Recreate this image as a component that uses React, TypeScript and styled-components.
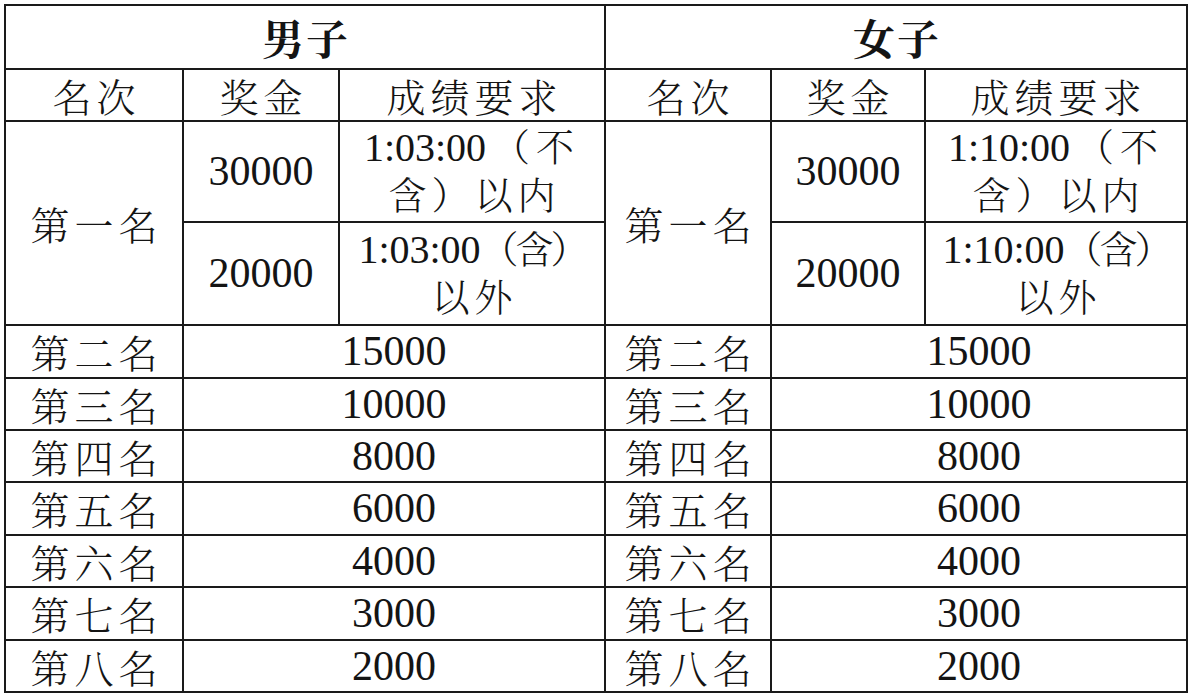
import React from 'react';
import styled, { createGlobalStyle } from 'styled-components';

const GlobalStyle = createGlobalStyle`
  html, body {
    margin: 0;
    padding: 0;
    background: #ffffff;
  }
  body {
    padding: 4px;
  }
`;

const cjk = `"Noto Serif CJK SC", "Noto Sans CJK SC", serif`;

const Table = styled.table`
  border-collapse: collapse;
  table-layout: fixed;
  width: 1184px;
  color: #141414;
  background: #ffffff;
`;

const Row = styled.tr<{ $h: number }>`
  height: ${(p) => p.$h}px;
`;

const Cell = styled.td<{ $num?: boolean; $bold?: boolean }>`
  border: 2px solid #1a1a1a;
  padding: 0;
  text-align: center;
  vertical-align: middle;
  font-family: ${(p) => (p.$num ? `"Liberation Serif", ${cjk}` : cjk)};
  font-size: ${(p) => (p.$bold ? 42 : p.$num ? 42 : 39)}px;
  font-weight: ${(p) => (p.$bold ? 700 : 300)};
  letter-spacing: ${(p) => (p.$num ? 0 : p.$bold ? 2 : 5)}px;
  padding-left: ${(p) => (p.$num ? 0 : p.$bold ? 2 : 5)}px;
  line-height: 1.15;
  white-space: nowrap;
`;

const Lines = styled.div`
  display: flex;
  flex-direction: column;
  align-items: center;
  line-height: 48px;
  font-family: "Liberation Serif", ${cjk};
  font-size: 40px;
  font-weight: 300;
`;

const Paren = styled.span<{ $gap: number }>`
  font-size: 38px;
  letter-spacing: ${(p) => p.$gap}px;
  margin-left: ${(p) => (p.$gap > 0 ? p.$gap : 0)}px;
`;

const Group = styled.div`
  font-size: 38px;
  letter-spacing: 5px;
  padding-left: 5px;
`;

const cols = [178, 156, 266, 166, 154, 262];

const places = [
  ['第二名', '15000'],
  ['第三名', '10000'],
  ['第四名', '8000'],
  ['第五名', '6000'],
  ['第六名', '4000'],
  ['第七名', '3000'],
  ['第八名', '2000'],
];
const placeHeights = [53, 52, 52, 53, 52, 53, 52];

const Requirement: React.FC<{ time: string; within: boolean }> = ({ time, within }) =>
  within ? (
    <Lines>
      <span>
        {time}
        <Paren $gap={6}>（不</Paren>
      </span>
      <Group>含）以内</Group>
    </Lines>
  ) : (
    <Lines>
      <span>
        {time}
        <Paren $gap={-3}>（含）</Paren>
      </span>
      <Group>以外</Group>
    </Lines>
  );

const App: React.FC = () => {
  const sides = [
    { title: '男子', time: '1:03:00' },
    { title: '女子', time: '1:10:00' },
  ];
  return (
    <>
      <GlobalStyle />
      <Table>
        <colgroup>
          {cols.map((w, i) => (
            <col key={i} style={{ width: w }} />
          ))}
        </colgroup>
        <tbody>
          <Row $h={64}>
            {sides.map((s) => (
              <Cell key={s.title} colSpan={3} $bold>
                {s.title}
              </Cell>
            ))}
          </Row>
          <Row $h={52}>
            {sides.map((s) => (
              <React.Fragment key={s.title}>
                <Cell>名次</Cell>
                <Cell>奖金</Cell>
                <Cell>成绩要求</Cell>
              </React.Fragment>
            ))}
          </Row>
          <Row $h={101}>
            {sides.map((s) => (
              <React.Fragment key={s.title}>
                <Cell rowSpan={2}>第一名</Cell>
                <Cell $num>30000</Cell>
                <Cell $num>
                  <Requirement time={s.time} within />
                </Cell>
              </React.Fragment>
            ))}
          </Row>
          <Row $h={103}>
            {sides.map((s) => (
              <React.Fragment key={s.title}>
                <Cell $num>20000</Cell>
                <Cell $num>
                  <Requirement time={s.time} within={false} />
                </Cell>
              </React.Fragment>
            ))}
          </Row>
          {places.map(([place, prize], i) => (
            <Row key={place} $h={placeHeights[i]}>
              {sides.map((s) => (
                <React.Fragment key={s.title}>
                  <Cell>{place}</Cell>
                  <Cell colSpan={2} $num>
                    {prize}
                  </Cell>
                </React.Fragment>
              ))}
            </Row>
          ))}
        </tbody>
      </Table>
    </>
  );
};

export default App;
